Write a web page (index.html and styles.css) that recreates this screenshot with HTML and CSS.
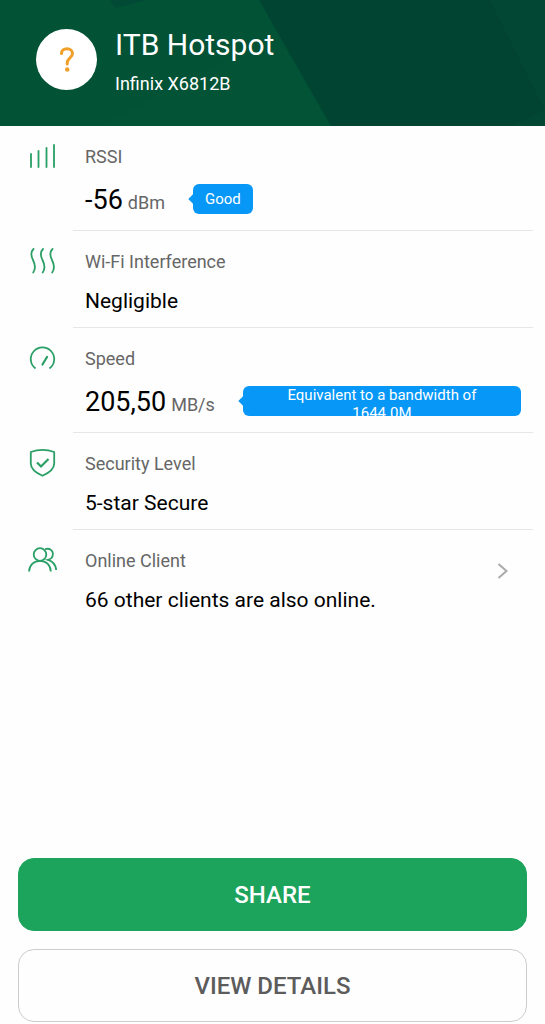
FILE: index.html
```html
<!DOCTYPE html>
<html lang="en">
<head>
<meta charset="utf-8">
<meta name="viewport" content="width=device-width, initial-scale=1">
<title>ITB Hotspot</title>
<link rel="stylesheet" href="styles.css">
</head>
<body>
<div class="screen">
  <header class="header">
    <svg class="header-art" viewBox="0 0 545 126" preserveAspectRatio="xMinYMin slice" aria-hidden="true">
      <path fill="#024432" d="M259 0H2000V126H331z"/>
      <path fill="#024a35" d="M110 0h36l-31 8z"/>
      <path fill="#034b37" d="M490 0H2000V126H512l33-16z" opacity=".4"/>
      <path fill="#05573a" d="M100 126 220 62l60-22 50 86z" opacity=".3"/>
    </svg>
    <div class="avatar">
      <svg width="14" height="25" viewBox="0 0 14 25" fill="none" stroke="#f0a02a" stroke-width="3" stroke-linecap="round" aria-hidden="true">
        <path d="M1.500 6.500C1.500 3.500 4 1.700 7 1.700c3.200 0 5.500 2 5.500 4.900 0 4.500-5.300 4.200-5.300 9.400v1"/>
        <circle cx="7.200" cy="22.500" r="2.200" fill="#f0a02a" stroke="none"/>
      </svg>
    </div>
    <div class="heading">
      <h1 class="title">ITB Hotspot</h1>
      <p class="subtitle">Infinix X6812B</p>
    </div>
  </header>

  <main class="list">
    <section class="row">
      <svg class="icon" viewBox="0 0 30 30" aria-hidden="true"><path stroke-linecap="round" d="M4 12V25M11.500 9V25M19.500 6V25M27 3V25"/></svg>
      <div class="info">
        <h2 class="label">RSSI</h2>
        <div class="metric">
          <p class="number">-56 <span class="unit">dBm</span></p>
          <span class="bubble"><span class="bubble-text">Good</span></span>
        </div>
      </div>
    </section>

    <section class="row">
      <svg class="icon" viewBox="0 0 30 30" aria-hidden="true"><path stroke-linecap="round" d="M6.500 2C3.500 5 4 9 6 13s3.500 8 .200 12.500M16 2C13 5 13.500 9 15.500 13s3.500 8 .200 12.500M25.500 2C22.500 5 23 9 25 13s3.500 8 .200 12.500"/></svg>
      <div class="info">
        <h2 class="label">Wi-Fi Interference</h2>
        <p class="value">Negligible</p>
      </div>
    </section>

    <section class="row">
      <svg class="icon" viewBox="0 0 30 30" aria-hidden="true"><path d="M8.500 24.500A11.700 11.700 0 1 1 22.500 24.500"/><path class="bold" stroke-linecap="round" d="M15.500 20.500 20 13"/></svg>
      <div class="info">
        <h2 class="label">Speed</h2>
        <div class="metric">
          <p class="number">205,50 <span class="unit">MB/s</span></p>
          <span class="bubble bubble-long"><span class="bubble-text">Equivalent to a bandwidth of 1644.0M</span></span>
        </div>
      </div>
    </section>

    <section class="row">
      <svg class="icon" viewBox="0 0 30 30" aria-hidden="true"><path stroke-linejoin="round" d="M3.800 3C11 .500 20 .500 27.200 3V14.500c0 6-5.500 9.500-11.700 12.300C9.300 24 3.800 20.500 3.800 14.500z"/><path class="bold" d="M10 13.500l4 4 7.500-7.500"/></svg>
      <div class="info">
        <h2 class="label">Security Level</h2>
        <p class="value">5-star Secure</p>
      </div>
    </section>

    <a class="row" href="#clients">
      <svg class="icon" viewBox="0 0 30 30" aria-hidden="true"><circle cx="13" cy="8.500" r="6.300"/><path d="M2 25.500C2.500 19 7 14.800 13 14.800s10.500 4.200 10.800 10.700M18 3.200c4.500-1.500 8.200 1 7.900 5-.200 3-2.200 5-5 5.700 4.700 1.400 7.800 5 8.300 10.100"/></svg>
      <div class="info">
        <h2 class="label">Online Client</h2>
        <p class="value">66 other clients are also online.</p>
      </div>
      <svg class="chevron" viewBox="0 0 12 18" aria-hidden="true"><path d="M1.500 2l8 7-8 7"/></svg>
    </a>
  </main>

  <footer class="actions">
    <button class="button primary" type="button">SHARE</button>
    <button class="button" type="button">VIEW DETAILS</button>
  </footer>
</div>
</body>
</html>
```
FILE: styles.css
```css
* {
  box-sizing: border-box;
}

body,
h1,
h2,
p {
  margin: 0;
  font-weight: 400;
}

body {
  background: #fefefe;
  color: #000;
  font-family: Roboto, "Liberation Sans", sans-serif;
}

.screen {
  display: flex;
  flex-direction: column;
  min-height: 100vh;
}

.header {
  position: relative;
  display: flex;
  align-items: center;
  gap: 18px;
  padding: 24px 36px;
  background: #025236;
  color: #fff;
  overflow: hidden;
}

.header-art {
  position: absolute;
  inset: 0;
  width: 100%;
  height: 100%;
}

.avatar {
  position: relative;
  display: flex;
  align-items: center;
  justify-content: center;
  width: 61px;
  height: 61px;
  margin-bottom: 8px;
  border-radius: 50%;
  background: #fff;
}

.heading {
  position: relative;
}

.title {
  font-size: 30px;
  line-height: 42px;
}

.subtitle {
  font-size: 18px;
  line-height: 36px;
}

.row {
  display: flex;
  padding-right: 12px;
  color: inherit;
  text-decoration: none;
}

.icon {
  flex: none;
  width: 30px;
  height: 30px;
  margin: 16px 16px 0 27px;
  fill: none;
  stroke: #2a9f66;
  stroke-width: 1.8;
}

.bold {
  stroke-width: 2.2;
}

.info {
  flex: 1;
  min-width: 0;
  padding: 20px 12px 14px;
  border-bottom: 1px solid #e6e6e6;
}

.row:last-child .info {
  border-bottom: 0;
}

.label {
  margin-bottom: 16px;
  color: #666;
  font-size: 18px;
  line-height: 22px;
}

.value {
  font-size: 21px;
  line-height: 24px;
}

.metric {
  display: flex;
  align-items: flex-start;
  gap: 28px;
}

.number {
  display: flex;
  flex: none;
  align-items: baseline;
  gap: 5px;
  font-size: 27px;
  line-height: 32px;
}

.unit {
  color: #666;
  font-size: 18px;
  line-height: 22px;
}

.bubble {
  position: relative;
  display: flex;
  height: 30px;
  padding: 0 12px;
  border-radius: 6px;
  background: #0697f7;
  color: #fff;
  font-size: 15px;
  line-height: 18px;
  text-align: center;
}

.bubble-long {
  padding: 0 20px;
}

.bubble::before {
  content: "";
  position: absolute;
  top: 11px;
  left: -3px;
  width: 8px;
  height: 8px;
  background: inherit;
  transform: rotate(45deg);
}

.bubble-text {
  position: relative;
  flex: 1;
  max-height: 30px;
  margin: auto;
  overflow: hidden;
}

.chevron {
  flex: none;
  width: 12px;
  height: 18px;
  margin: 32px 24px 0 0;
  fill: none;
  stroke: #aaa;
  stroke-width: 2;
}

.actions {
  display: flex;
  flex-direction: column;
  gap: 18px;
  margin-top: auto;
  padding: 18px 18px 2px;
}

.button {
  height: 73px;
  border: 1px solid #ccc;
  border-radius: 16px;
  background: #fefefe;
  color: #5c5c5c;
  font-family: inherit;
  font-size: 24px;
  font-weight: 500;
}

.primary {
  border-color: #1da45c;
  background: #1da45c;
  color: #fff;
}
```
